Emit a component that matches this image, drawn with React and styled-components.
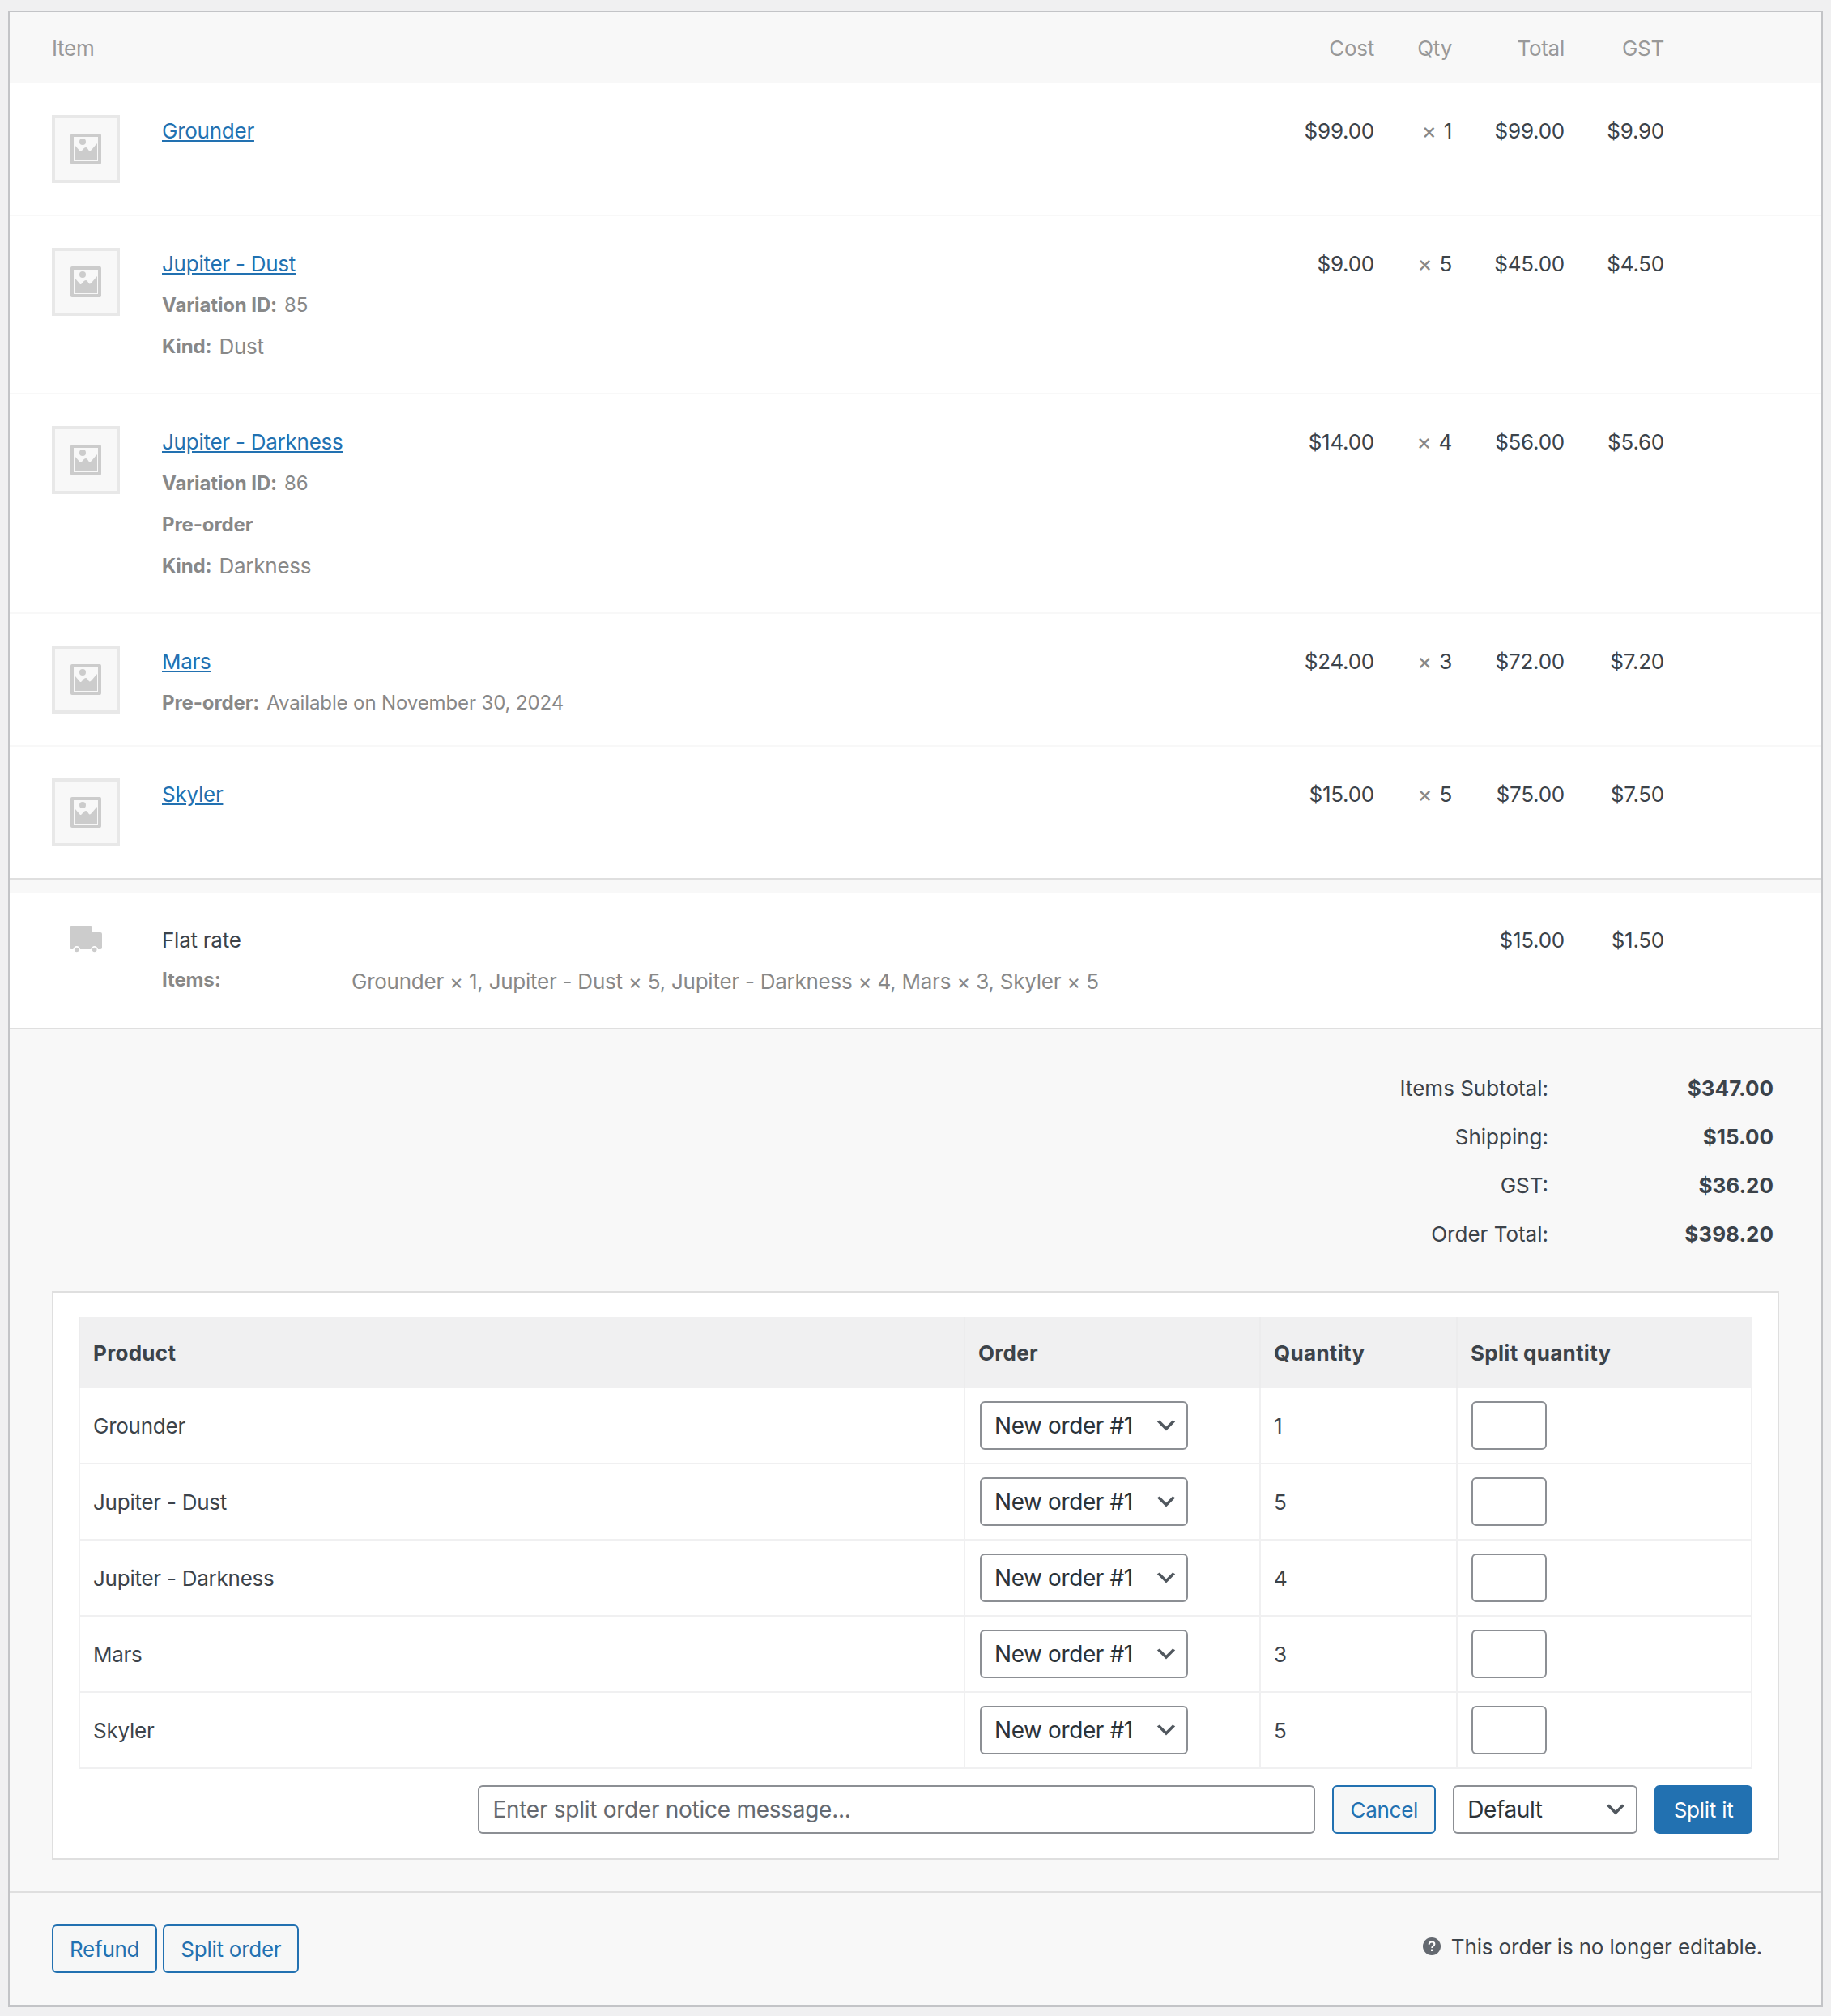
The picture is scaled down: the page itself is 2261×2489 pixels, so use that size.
import React from "react";
import styled, { createGlobalStyle } from "styled-components";

const Global = createGlobalStyle`
  html, body {
    margin: 0;
    padding: 0;
    background: #f0f0f1;
  }
  body {
    font-family: Inter, "Noto Sans", "Liberation Sans", sans-serif;
    font-size: 26px;
    letter-spacing: -0.25px;
    color: #3c434a;
  }
`;

const Page = styled.div`
  padding: 13px 10px 11px;
`;

const Box = styled.div`
  border: 2px solid #c3c4c7;
  border-bottom-width: 3px;
  background: #f8f8f8;
`;

const ItemGrid = styled.div`
  display: grid;
  grid-template-columns: 84px 1fr 140px 96px 139px 123px;
  padding: 39px 194px ${(p) => p.$bottom || 39}px 52px;
  margin-top: ${(p) => p.$top || 0}px;
  background: #fff;
  border-bottom: ${(p) => p.$line || "2px solid #f8f8f8"};
  line-height: 40px;
`;

const HeadGrid = styled(ItemGrid)`
  padding: 2px 194px 0 52px;
  height: 88px;
  box-sizing: border-box;
  align-items: center;
  background: #f8f8f8;
  border-bottom: 0;
  color: #999;
`;

const HeadItem = styled.div`
  grid-column: 1 / 3;
`;

const Num = styled.div`
  text-align: right;
`;

const Times = styled.small`
  font-size: 28px;
  line-height: 0;
  color: #888;
  margin-right: 9px;
`;

const Thumb = styled.div`
  width: 84px;
  height: 84px;
  box-sizing: border-box;
  border: 4px solid #e8e8e8;
  background: #f8f8f8;
  display: flex;
  align-items: center;
  justify-content: center;
`;

const Name = styled.div`
  padding-left: 52px;
  margin-bottom: -2px;
`;

const ItemLink = styled.a`
  color: #2271b1;
  text-decoration: underline;
`;

const Meta = styled.div`
  margin-top: ${(p) => p.$top || 21}px;
  margin-bottom: ${(p) => p.$bottom || 0}px;
  line-height: 30px;
  font-size: 24px;
  letter-spacing: -0.12px;
  color: #888;
  display: flex;
`;

const MetaLabel = styled.b`
  font-weight: 700;
  min-width: ${(p) => p.$width || 0}px;
  margin-right: ${(p) => (p.$width ? 0 : 9)}px;
`;

const MetaValue = styled.span`
  font-size: 26px;
  letter-spacing: -0.25px;
  margin-top: ${(p) => p.$drop || 0}px;
`;

const ShipIcon = styled.div`
  display: flex;
  justify-content: center;
  padding-top: 2px;
`;

const Totals = styled.div`
  padding: 42px 0 41px;
  letter-spacing: 0;
`;

const TotalRow = styled.div`
  display: grid;
  grid-template-columns: 1fr 278px;
  width: 2178px;
  height: 60px;
  align-items: center;
  text-align: right;
`;

const TotalValue = styled.b`
  font-weight: 700;
`;

const SplitPanel = styled.div`
  margin: 0 52px 39px;
  padding: 30px 31px;
  background: #fff;
  border: 2px solid #dfdfdf;
`;

const SplitTable = styled.div`
  display: grid;
  grid-template-columns: 1093px 365px 243px 366px;
`;

const HeadCell = styled.div`
  height: 88px;
  box-sizing: border-box;
  display: flex;
  align-items: center;
  padding-left: 16px;
  background: #f0f0f1;
  border-left: 2px solid #ececed;
  font-weight: 700;
  letter-spacing: 0.3px;
`;

const Cell = styled.div`
  height: 94px;
  box-sizing: border-box;
  display: flex;
  align-items: center;
  padding-left: ${(p) => p.$pad || 16}px;
  border-left: 2px solid #f0f0f1;
  border-bottom: 2px solid #f0f0f1;
  border-right: ${(p) => (p.$last ? "2px solid #f0f0f1" : "0")};
`;

const SelectWrap = styled.div`
  position: relative;
  width: ${(p) => p.$width}px;
  height: 60px;
  flex: none;

  svg {
    position: absolute;
    right: 11px;
    top: 14px;
    pointer-events: none;
  }
`;

const Select = styled.select`
  appearance: none;
  width: 100%;
  height: 100%;
  padding: 0 16px;
  box-sizing: border-box;
  border: 2px solid #8c8f94;
  border-radius: 6px;
  background: #fff;
  color: #2c3338;
  font-family: inherit;
  font-size: 28px;
  letter-spacing: -0.4px;
`;

const QtyInput = styled.input`
  width: 93px;
  height: 60px;
  box-sizing: border-box;
  border: 2px solid #8c8f94;
  border-radius: 6px;
  background: #fff;
`;

const SplitActions = styled.div`
  display: flex;
  justify-content: flex-end;
  gap: 21px;
  margin-top: 20px;
`;

const Notice = styled.input`
  width: 1034px;
  height: 60px;
  box-sizing: border-box;
  padding: 0 16px;
  border: 2px solid #8c8f94;
  border-radius: 6px;
  font-family: inherit;
  font-size: 28px;
  letter-spacing: -0.27px;
  color: #2c3338;

  &::placeholder {
    color: #646970;
    opacity: 1;
  }
`;

const Button = styled.button`
  height: 60px;
  box-sizing: border-box;
  padding: 0 ${(p) => (p.$primary ? 21.5 : 20)}px;
  border: 2px solid #2271b1;
  border-radius: 6px;
  background: ${(p) => (p.$primary ? "#2271b1" : "#f6f7f7")};
  color: ${(p) => (p.$primary ? "#fff" : "#2271b1")};
  font-family: inherit;
  font-size: 26px;
  letter-spacing: -0.25px;
`;

const Footer = styled.div`
  display: flex;
  justify-content: space-between;
  align-items: center;
  padding: 39px 0 39px 52px;
  border-top: 2px solid #dfdfdf;
`;

const FooterButtons = styled.div`
  display: flex;
  gap: 7px;
`;

const NoLonger = styled.div`
  display: flex;
  align-items: center;
  gap: 13px;
  margin-right: 73px;
  letter-spacing: -0.15px;
  position: relative;
  top: -3px;
`;

const ImageIcon = () => (
  <svg width="38" height="38" viewBox="0 0 38 38">
    <rect width="38" height="38" rx="2" fill="#ccc" />
    <rect x="4" y="4" width="30" height="30" fill="#f8f8f8" />
    <circle cx="15" cy="10" r="4" fill="#ccc" />
    <path
      d="M6 15 L12 22 C14 23 16 17 19 17 C22 17 22 23 25 21 C28 18 30 15 33 12 L33 33 L6 33 Z"
      fill="#ccc"
    />
  </svg>
);

const TruckIcon = () => (
  <svg width="40" height="34" viewBox="0 0 40 34">
    <path
      d="M2 0 H26 a2 2 0 0 1 2 2 V8 H38 a2 2 0 0 1 2 2 V27 a2 2 0 0 1 -2 2 H2 a2 2 0 0 1 -2 -2 V2 a2 2 0 0 1 2 -2 Z"
      fill="#ccc"
    />
    <circle cx="8.7" cy="29.5" r="3.6" fill="#ccc" stroke="#fff" strokeWidth="1.6" />
    <circle cx="30.7" cy="29.5" r="3.6" fill="#ccc" stroke="#fff" strokeWidth="1.6" />
  </svg>
);

const Chevron = () => (
  <svg width="32" height="32" viewBox="0 0 20 20">
    <path d="M5 6l5 5 5-5 2 1-7 7-7-7 2-1z" fill="#50575e" />
  </svg>
);

const HelpIcon = () => (
  <svg width="22" height="22" viewBox="0 0 22 22">
    <circle cx="11" cy="11" r="11" fill="#646970" />
    <path
      d="M7.6 8.6 C7.8 6.6 9.3 5.6 11.1 5.6 C13 5.6 14.4 6.7 14.4 8.3 C14.4 10.4 11.2 10.6 11.2 13"
      fill="none"
      stroke="#fff"
      strokeWidth="2"
    />
    <rect x="10" y="14.6" width="2.4" height="2.4" fill="#fff" />
  </svg>
);

const items = [
  {
    name: "Grounder",
    cost: "$99.00",
    qty: 1,
    total: "$99.00",
    gst: "$9.90",
    meta: [],
  },
  {
    name: "Jupiter - Dust",
    cost: "$9.00",
    qty: 5,
    total: "$45.00",
    gst: "$4.50",
    meta: [
      { label: "Variation ID:", text: "85" },
      { label: "Kind:", value: "Dust" },
    ],
  },
  {
    name: "Jupiter - Darkness",
    cost: "$14.00",
    qty: 4,
    total: "$56.00",
    gst: "$5.60",
    meta: [
      { label: "Variation ID:", text: "86" },
      { label: "Pre-order" },
      { label: "Kind:", value: "Darkness" },
    ],
  },
  {
    name: "Mars",
    cost: "$24.00",
    qty: 3,
    total: "$72.00",
    gst: "$7.20",
    meta: [{ label: "Pre-order:", text: "Available on November 30, 2024" }],
  },
  {
    name: "Skyler",
    cost: "$15.00",
    qty: 5,
    total: "$75.00",
    gst: "$7.50",
    meta: [],
  },
];

const totals = [
  ["Items Subtotal:", "$347.00"],
  ["Shipping:", "$15.00"],
  ["GST:", "$36.20"],
  ["Order Total:", "$398.20"],
];

export default function App() {
  return (
    <Page>
      <Global />
      <Box>
        <HeadGrid>
          <HeadItem>Item</HeadItem>
          <Num>Cost</Num>
          <Num>Qty</Num>
          <Num>Total</Num>
          <Num>GST</Num>
        </HeadGrid>

        {items.map((item, i) => (
          <ItemGrid
            key={item.name}
            $line={i === items.length - 1 ? "2px solid #dfdfdf" : undefined}
          >
            <Thumb>
              <ImageIcon />
            </Thumb>
            <Name>
              <ItemLink href="#">{item.name}</ItemLink>
              {item.meta.map((m, j) => (
                <Meta
                  key={m.label}
                  $top={j === 0 ? 16 : 21}
                  $bottom={m.value ? 5 : 0}
                >
                  <MetaLabel>{m.label}</MetaLabel>
                  {m.text}
                  {m.value && <MetaValue>{m.value}</MetaValue>}
                </Meta>
              ))}
            </Name>
            <Num>{item.cost}</Num>
            <Num>
              <Times>×</Times>
              {item.qty}
            </Num>
            <Num>{item.total}</Num>
            <Num>{item.gst}</Num>
          </ItemGrid>
        ))}

        <ItemGrid $line="2px solid #dfdfdf" $top={16} $bottom={44}>
          <ShipIcon>
            <TruckIcon />
          </ShipIcon>
          <Name>
            Flat rate
            <Meta $top={14}>
              <MetaLabel $width={234}>Items:</MetaLabel>
              <MetaValue $drop={2}>
                Grounder × 1, Jupiter - Dust × 5, Jupiter - Darkness × 4, Mars × 3, Skyler × 5
              </MetaValue>
            </Meta>
          </Name>
          <Num />
          <Num />
          <Num>$15.00</Num>
          <Num>$1.50</Num>
        </ItemGrid>

        <Totals>
          {totals.map(([label, value]) => (
            <TotalRow key={label}>
              <span>{label}</span>
              <TotalValue>{value}</TotalValue>
            </TotalRow>
          ))}
        </Totals>

        <SplitPanel>
          <SplitTable>
            <HeadCell>Product</HeadCell>
            <HeadCell>Order</HeadCell>
            <HeadCell>Quantity</HeadCell>
            <HeadCell>Split quantity</HeadCell>
            {items.map((item) => (
              <React.Fragment key={item.name}>
                <Cell>{item.name}</Cell>
                <Cell $pad={18}>
                  <SelectWrap $width={257}>
                    <Select defaultValue="1">
                      <option value="1">New order #1</option>
                    </Select>
                    <Chevron />
                  </SelectWrap>
                </Cell>
                <Cell>{item.qty}</Cell>
                <Cell $pad={17} $last>
                  <QtyInput type="text" />
                </Cell>
              </React.Fragment>
            ))}
          </SplitTable>
          <SplitActions>
            <Notice placeholder="Enter split order notice message..." />
            <Button>Cancel</Button>
            <SelectWrap $width={228}>
              <Select defaultValue="d">
                <option value="d">Default</option>
              </Select>
              <Chevron />
            </SelectWrap>
            <Button $primary>Split it</Button>
          </SplitActions>
        </SplitPanel>

        <Footer>
          <FooterButtons>
            <Button>Refund</Button>
            <Button>Split order</Button>
          </FooterButtons>
          <NoLonger>
            <HelpIcon />
            This order is no longer editable.
          </NoLonger>
        </Footer>
      </Box>
    </Page>
  );
}
